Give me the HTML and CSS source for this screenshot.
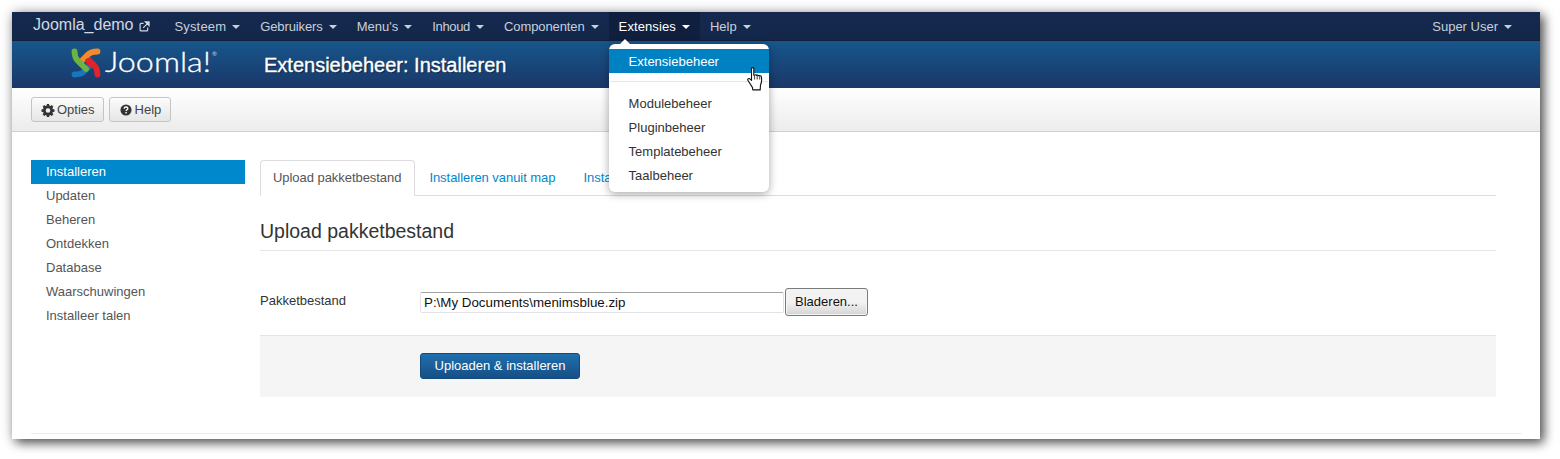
FILE: index.html
```html
<!DOCTYPE html>
<html lang="nl">
<head>
<meta charset="utf-8">
<title>Extensiebeheer: Installeren</title>
<link rel="stylesheet" href="styles.css">
</head>
<body>
<div class="window">
  <nav class="navbar">
    <a class="brand">Joomla_demo
      <svg class="ext" viewBox="0 0 12 12"><path d="M5 2.500H2.200a1 1 0 0 0-1 1v6.300a1 1 0 0 0 1 1h6.300a1 1 0 0 0 1-1V7" fill="none" stroke="currentColor" stroke-width="1.300"/><path d="M4.500 7.500 10 2M6.800 1h4.200v4.200z" fill="currentColor" stroke="currentColor" stroke-width="1.200"/></svg>
    </a>
    <ul class="menu">
      <li class="menu-item wide">Systeem<i class="caret"></i></li>
      <li class="menu-item narrow">Gebruikers<i class="caret"></i></li>
      <li class="menu-item">Menu's<i class="caret"></i></li>
      <li class="menu-item tight">Inhoud<i class="caret"></i></li>
      <li class="menu-item narrow">Componenten<i class="caret"></i></li>
      <li class="menu-item open">Extensies<i class="caret"></i>
        <ul class="dropdown">
          <li class="drop-item active">Extensiebeheer</li>
          <li class="drop-divider"></li>
          <li class="drop-item">Modulebeheer</li>
          <li class="drop-item">Pluginbeheer</li>
          <li class="drop-item">Templatebeheer</li>
          <li class="drop-item">Taalbeheer</li>
        </ul>
      </li>
      <li class="menu-item">Help<i class="caret"></i></li>
    </ul>
    <div class="menu-item user">Super User<i class="caret"></i></div>
  </nav>

  <header class="header">
    <div class="logo">
      <svg class="mark" viewBox="0 0 30 30">
        <g fill="none" stroke-width="5.800" stroke-linecap="round" stroke-linejoin="round">
          <path d="M3.500 26.500Q10 26.500 13 23.500L21 15.500" stroke="#1a75bc"/>
          <path d="M26.500 26.500Q26.500 20.500 23 17L15 9" stroke="#e1232a"/>
          <path d="M26.500 3.500Q20 3.500 17 6.500L9 14.500" stroke="#f58a2b"/>
          <path d="M3.500 3.500Q3.500 9.500 7 13L15 21" stroke="#6cb33f"/>
          <path d="M17 13 21 17" stroke="#e1232a"/>
        </g>
      </svg>
      <svg class="wordmark" viewBox="0 0 112 30"><text x="0" y="25" textLength="106" lengthAdjust="spacingAndGlyphs">Joomla!</text><text class="reg" x="107" y="9">®</text></svg>
    </div>
    <h1 class="page-title">Extensiebeheer: Installeren</h1>
  </header>

  <div class="subhead">
    <button class="tool-btn">
      <svg class="tool-icon" viewBox="0 0 14 14"><path fill="#333" fill-rule="evenodd" d="M5.700 0h2.600l.4 1.900 1.100.5L11.500 1.300l1.800 1.800-1.100 1.700.5 1.100 1.900.4v2.600l-1.900.4-.5 1.100 1.100 1.700-1.800 1.800-1.700-1.100-1.100.5-.4 1.900H5.700l-.4-1.900-1.100-.5-1.700 1.100L.7 12.100l1.100-1.700-.5-1.100L-.6 8.900V6.300l1.900-.4.5-1.100L.7 3.100l1.800-1.800 1.700 1.100 1.100-.5zM7 4.900a2.700 2.700 0 1 0 0 5.400 2.700 2.700 0 0 0 0-5.400z"/></svg>
      Opties
    </button>
    <button class="tool-btn">
      <svg class="tool-icon" viewBox="0 0 14 14"><circle cx="7" cy="7" r="6.500" fill="#333"/><path d="M4.800 5.500c0-1.400 1-2 2.200-2s2.200.7 2.200 1.800c0 1.500-2.100 1.500-2.100 3" fill="none" stroke="#fff" stroke-width="1.500"/><rect x="6.200" y="9.300" width="1.700" height="1.700" fill="#fff"/></svg>
      Help
    </button>
  </div>

  <div class="content">
    <ul class="sidebar">
      <li class="side-item active">Installeren</li>
      <li class="side-item">Updaten</li>
      <li class="side-item">Beheren</li>
      <li class="side-item">Ontdekken</li>
      <li class="side-item">Database</li>
      <li class="side-item">Waarschuwingen</li>
      <li class="side-item">Installeer talen</li>
    </ul>
    <main class="main">
      <ul class="tabs">
        <li class="tab active">Upload pakketbestand</li>
        <li class="tab">Installeren vanuit map</li>
        <li class="tab">Installeren vanaf URL</li>
      </ul>
      <h2 class="legend">Upload pakketbestand</h2>
      <div class="control-group">
        <label class="control-label">Pakketbestand</label>
        <div class="file-input">
          <span class="file-path">P:\My Documents\menimsblue.zip</span>
          <span class="browse">Bladeren...</span>
        </div>
      </div>
      <div class="form-actions">
        <button class="primary">Uploaden &amp; installeren</button>
      </div>
    </main>
  </div>
  <hr class="footer-rule">

  <svg class="hand" viewBox="0 0 18 24">
    <path d="M4.500 1.500c0-1.200 2.300-1.200 2.300 0v6.800l.8-.1c.6-.6 1.800-.5 2.100.3.700-.6 1.900-.4 2.200.4.800-.5 2.300-.2 2.500 1 .5 3 .3 5.500-.9 8l-.3 5H5.800l-.4-2.500L1 13.500c-.8-1.200.5-2.600 1.800-1.700l1.700 1.500z" fill="#fff" stroke="#111" stroke-width="1.100" stroke-linejoin="round"/>
    <path d="M7.600 8.500v4M10.200 8.800v3.700M12.700 9.300v3.200" stroke="#111" stroke-width=".8" fill="none"/>
  </svg>
</div>
</body>
</html>
```
FILE: styles.css
```css
* { box-sizing: border-box; }
html, body { margin: 0; padding: 0; background: #fff; overflow: hidden; }
body { height: 459px; font-family: "Liberation Sans", Arial, sans-serif; font-size: 13px; line-height: 18px; color: #333; }
ul { list-style: none; margin: 0; padding: 0; }
.window { position: relative; width: 1528px; height: 427px; margin: 12px 0 0 12px; background: #fff; box-shadow: 4px 4px 10px rgba(0,0,0,.62), 0 0 12px rgba(0,0,0,.22); }

.navbar { position: relative; z-index: 5; display: flex; align-items: stretch; height: 29px; padding-left: 21px; background: linear-gradient(#15294f, #13274a); border-bottom: 1px solid #0f1f3c; color: #c6d0dc; }
.brand { display: flex; align-items: center; gap: 5px; font-size: 16px; color: #d2d8e0; margin-right: 15px; padding-bottom: 2px; }
.ext { width: 11px; height: 11px; margin-top: 2px; }
.menu { display: flex; }
.menu-item { position: relative; display: flex; align-items: center; gap: 6px; padding: 1px 10px 0; font-size: 13px; cursor: pointer; }
.menu-item.wide { letter-spacing: .15px; }
.menu-item.narrow { letter-spacing: -.1px; }
.menu-item.tight { letter-spacing: -.33px; }
.caret { display: block; width: 0; height: 0; margin-top: 1px; border-left: 4px solid transparent; border-right: 4px solid transparent; border-top: 4px solid currentColor; }
.menu-item.open { background: #111f3e; color: #fff; letter-spacing: .1px; }
.user { margin-left: auto; padding-right: 28px; }

.dropdown { position: absolute; top: 32px; left: 0; width: 160px; padding: 5px 0; background: #fff; border-radius: 6px; box-shadow: 0 2px 8px rgba(0,0,0,.35); color: #333; letter-spacing: 0; }
.dropdown::before { content: ""; position: absolute; top: -5px; left: 11px; border-left: 5px solid transparent; border-right: 5px solid transparent; border-bottom: 5px solid #fff; }
.drop-item { height: 24px; line-height: 25px; padding-left: 20px; font-size: 13px; white-space: nowrap; }
.drop-item.active { background: #0081c2; color: #fff; }
.drop-divider { height: 1px; margin: 8px 1px 9px; background: #e5e5e5; }

.header { display: flex; align-items: center; height: 47px; background: linear-gradient(#17568c, #1a3768); padding-left: 59px; }
.logo { display: flex; align-items: center; gap: 4px; width: 193px; height: 47px; }
.mark { width: 30px; height: 30px; margin-top: -4px; }
.wordmark { width: 112px; height: 30px; margin-top: -5px; overflow: visible; }
.wordmark text { font-family: "Lato", "Liberation Sans", sans-serif; font-weight: 300; font-size: 27px; fill: #fff; stroke: #fff; stroke-width: .3px; }
.wordmark .reg { font-size: 6px; font-weight: 400; fill: #c8d4e0; stroke: none; }
.page-title { margin: 0; font-size: 20px; font-weight: 400; line-height: 24px; color: #fff; text-shadow: 1px 1px 1px #0a2240; -webkit-text-stroke: .35px #fff; }

.subhead { display: flex; align-items: flex-start; gap: 5px; height: 44px; padding: 9px 0 0 19px; background: linear-gradient(#fff, #ececec); border-bottom: 1px solid #d0d0d0; }
.tool-btn { display: flex; align-items: center; gap: 3px; height: 25px; padding: 0 9px 0 10px; font: 13px "Liberation Sans", Arial, sans-serif; color: #444; background: linear-gradient(#fbfbfb, #e6e6e6); border: 1px solid #c4c4c4; border-radius: 3px; box-shadow: inset 0 1px 0 #fff; }
.tool-btn:first-child { padding-right: 8px; }
.tool-icon { width: 12px; height: 12px; overflow: visible; }

.content { display: flex; padding: 28px 44px 0 19px; }
.sidebar { width: 214px; margin-right: 15px; flex: none; }
.side-item { height: 24px; line-height: 24px; padding-left: 15px; font-size: 13px; color: #555; }
.side-item.active { background: #0088cc; color: #fff; }

.main { flex: 1; min-width: 0; }
.tabs { display: flex; height: 36px; border-bottom: 1px solid #ddd; }
.tab { height: 36px; line-height: 33px; padding: 0 12px; margin-right: 2px; font-size: 13px; letter-spacing: -.05px; color: #0088cc; border: 1px solid transparent; border-radius: 4px 4px 0 0; white-space: nowrap; }
.tab.active { background: #fff; color: #555; border-color: #ddd #ddd transparent; padding-right: 13px; margin-right: 1px; }
.legend { margin: 0; padding: 24px 0 7px; height: 55px; line-height: 23px; font-size: 19.500px; font-weight: 400; color: #333; border-bottom: 1px solid #e5e5e5; }
.control-group { display: flex; align-items: center; height: 84px; padding-top: 18px; }
.control-label { width: 160px; flex: none; font-size: 13px; color: #333; margin-top: -3px; }
.file-input { display: flex; align-items: center; gap: 1px; }
.file-path { width: 364px; height: 21px; line-height: 20px; padding-left: 3px; font-size: 13.333px; color: #111; background: #fff; border: 1px solid #e2e3ea; border-top-color: #a3a3a3; border-radius: 2px; }
.browse { width: 83px; height: 28px; line-height: 25px; text-align: center; font-size: 13px; color: #111; background: linear-gradient(#f2f2f2 50%, #d4d4d4); border: 1px solid #7a7a7a; border-radius: 3px; box-shadow: inset 0 0 0 1px #f5f5f5; }
.form-actions { height: 62px; padding: 17px 0 0 160px; background: #f5f5f5; border-top: 1px solid #e5e5e5; }
.primary { display: block; width: 160px; height: 26px; padding: 0 0 2px; font: 13px "Liberation Sans", Arial, sans-serif; color: #fff; background: linear-gradient(#1f6fad, #174f86); border: 1px solid #154a7d; border-radius: 3px; }

.footer-rule { height: 1px; margin: 36px 18px 0 19px; border: 0; background: #eee; }
.hand { position: absolute; left: 735px; top: 55px; width: 18px; height: 24px; z-index: 9; }
```
